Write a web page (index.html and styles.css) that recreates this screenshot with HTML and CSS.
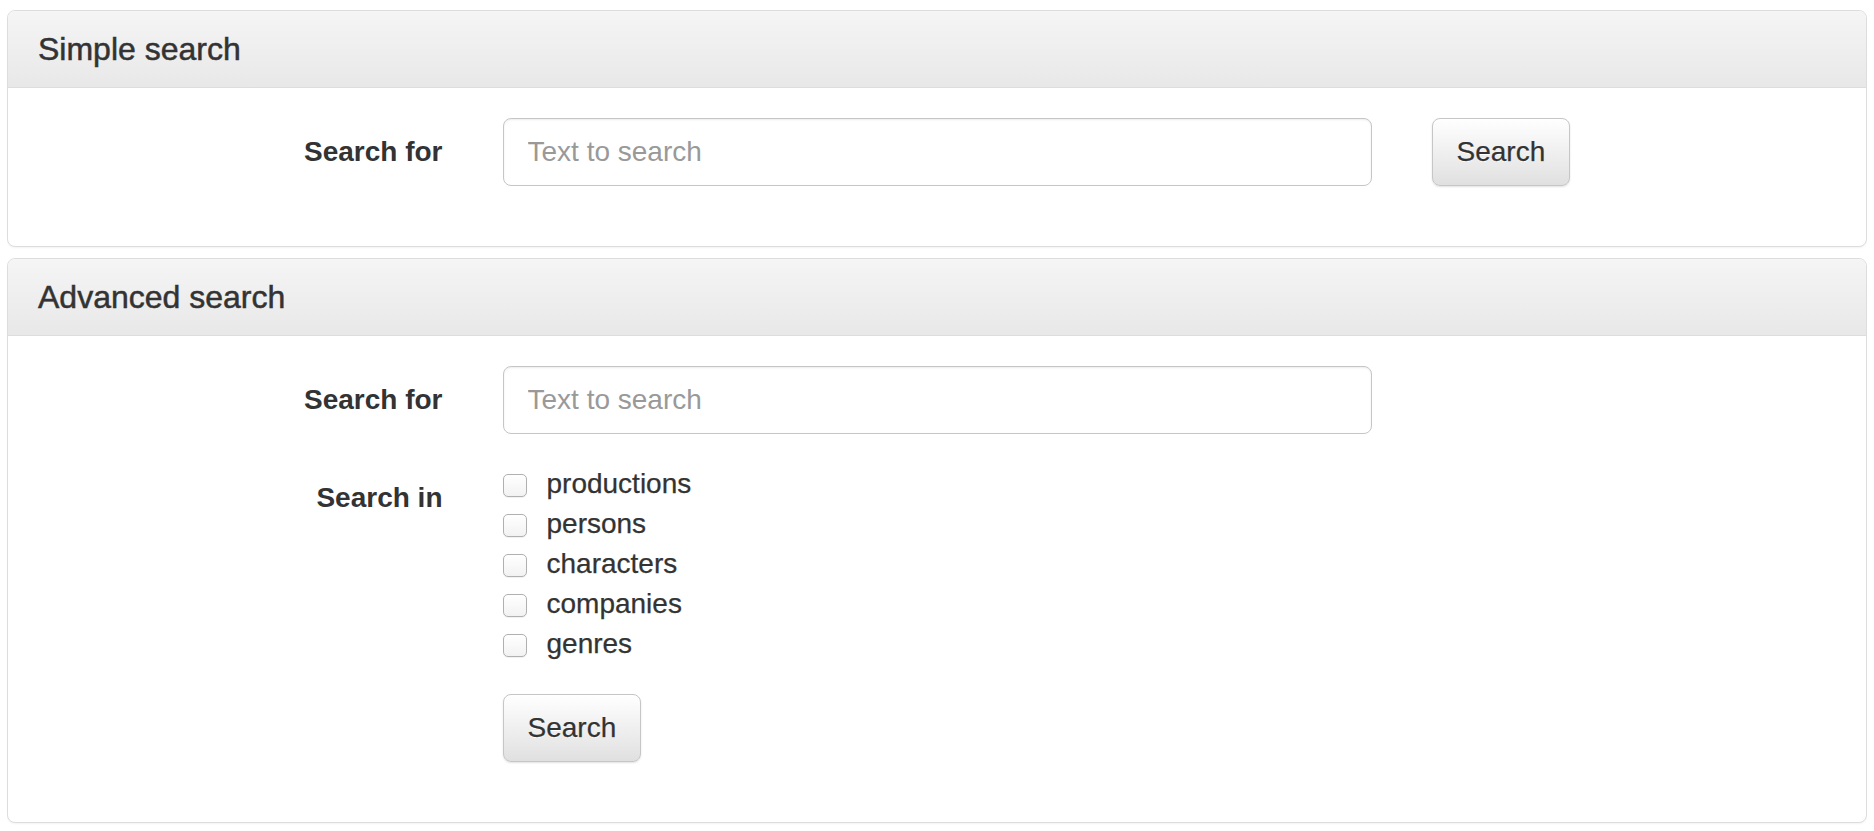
FILE: index.html
```html
<!DOCTYPE html>
<html>
<head>
<meta charset="utf-8">
<title>Search</title>
<link rel="stylesheet" href="styles.css">
</head>
<body>
<div class="panel">
  <div class="panel-heading"><h3 class="panel-title">Simple search</h3></div>
  <div class="panel-body">
    <form class="form-group">
      <label class="control-label">Search for</label>
      <div class="col"><input class="form-control" type="text" placeholder="Text to search"></div>
      <div class="col"><button class="btn" type="button">Search</button></div>
    </form>
  </div>
</div>
<div class="panel">
  <div class="panel-heading"><h3 class="panel-title">Advanced search</h3></div>
  <div class="panel-body">
    <form>
      <div class="form-group">
        <label class="control-label">Search for</label>
        <div class="col"><input class="form-control" type="text" placeholder="Text to search"></div>
      </div>
      <div class="form-group">
        <label class="control-label">Search in</label>
        <div class="col checks">
          <label class="check"><input type="checkbox"><span>productions</span></label>
          <label class="check"><input type="checkbox"><span>persons</span></label>
          <label class="check"><input type="checkbox"><span>characters</span></label>
          <label class="check"><input type="checkbox"><span>companies</span></label>
          <label class="check"><input type="checkbox"><span>genres</span></label>
        </div>
      </div>
      <div class="form-group">
        <div class="col offset"><button class="btn" type="button">Search</button></div>
      </div>
    </form>
  </div>
</div>
</body>
</html>
```
FILE: styles.css
```css
* { box-sizing: border-box; }
html, body { background: #fff; }
body {
  margin: 10px 7px;
  font-family: "Liberation Sans", Arial, Helvetica, sans-serif;
  font-size: 28px;
  line-height: 40px;
  color: #333;
}
.panel {
  border: 1px solid #ddd;
  border-radius: 8px;
  margin-bottom: 11px;
  background: #fff;
  box-shadow: 0 1px 2px rgba(0,0,0,0.05);
}
.panel-heading {
  background: linear-gradient(to bottom, #f5f5f5 0%, #e8e8e8 100%);
  border-bottom: 1px solid #ddd;
  border-radius: 7px 7px 0 0;
  padding: 20px 30px;
}
.panel-title {
  margin: 0;
  font-size: 32px;
  line-height: 36px;
  font-weight: 400;
  color: #333;
  -webkit-text-stroke: 0.5px #333;
}
.panel-body {
  padding: 30px 0;
}
.form-group {
  display: grid;
  grid-template-columns: 1fr 2fr 1fr;
  margin: 0 0 30px 0;
}
.control-label {
  padding: 14px 30px 0 30px;
  text-align: right;
  font-weight: 700;
}
.col {
  padding: 0 30px;
}
.offset { grid-column: 2; }
.form-control {
  display: block;
  width: 100%;
  height: 68px;
  padding: 12px 24px;
  font-family: inherit;
  font-size: 28px;
  line-height: 40px;
  color: #555;
  background: #fff;
  border: 1px solid #c6c6c6;
  border-radius: 8px;
  box-shadow: inset 0 1px 2px rgba(0,0,0,0.075);
  outline: none;
}
.form-control::placeholder { color: #999; }
.btn {
  display: inline-block;
  height: 68px;
  padding: 13px 24px;
  font-family: inherit;
  font-size: 28px;
  line-height: 40px;
  color: #333;
  text-shadow: 0 1px 0 #fff;
  background: linear-gradient(to bottom, #fff 0%, #e0e0e0 100%);
  border: 1px solid #c6c6c6;
  border-radius: 8px;
  box-shadow: inset 0 1px 0 rgba(255,255,255,0.15), 0 1px 2px rgba(0,0,0,0.12);
  cursor: pointer;
  -webkit-text-stroke: 0.25px #333;
}
.checks {
  display: flex;
  flex-direction: column;
}
.check {
  display: flex;
  align-items: flex-start;
  height: 40px;
  gap: 20px;
  font-weight: 400;
}
.check input {
  appearance: none;
  -webkit-appearance: none;
  margin: 10px 0 0 0;
  width: 24px;
  height: 23px;
  border: 1px solid #b0b0b0;
  border-radius: 5px;
  background: linear-gradient(to bottom, #fff 0%, #f2f2f2 100%);
  box-shadow: 0 1px 1px rgba(0,0,0,0.06);
  flex: none;
}
.check span {
  line-height: 40px;
  -webkit-text-stroke: 0.25px #333;
}
```
